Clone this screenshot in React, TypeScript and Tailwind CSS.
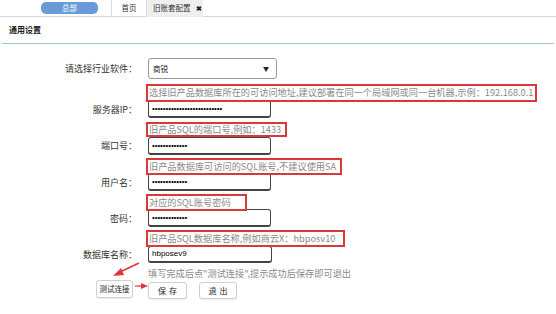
import React from "react";

const Dots = ({ n }: { n: number }) => (
  <span className="font-['Liberation_Sans',sans-serif] text-[8px] leading-none tracking-[-0.1px] text-black">
    {"•".repeat(n)}
  </span>
);

const Input = ({ children, w = "w-[123px]", h = "h-[18px]", mt }: { children: React.ReactNode; w?: string; h?: string; mt: string }) => (
  <div className={`relative ${mt} ${w} ${h} flex items-center pl-[3px] rounded-[3px] border border-[#444] border-b-2 border-r-[1.5px] bg-white`}>
    {children}
  </div>
);

const Row = ({ label, children }: { label?: string; children: React.ReactNode }) => (
  <div className="flex items-center">
    <div className="w-[148px] shrink-0 pr-[11px] text-right text-[9px] text-[#333]">{label ? `${label}：` : ""}</div>
    {children}
  </div>
);

const Hint = ({ text, w, h, mt }: { text: string; w: string; h: string; mt: string }) => (
  <div className={`relative z-10 flex ${mt}`}>
    <div className="w-[146px] shrink-0" />
    <div className={`${w} ${h} border-2 border-[#d9383d] flex items-center pl-[1px] text-[9.2px] leading-none text-[#8a8a8a] whitespace-nowrap`}>
      {text}
    </div>
  </div>
);

export default function App() {
  return (
    <div className="relative w-[556px] h-[314px] bg-white overflow-hidden font-['Noto_Sans_CJK_SC',sans-serif]">
      {/* top tab bar */}
      <div className="h-[17px] border-b border-[#d6d6d6] flex items-center">
        <div className="ml-[41px] w-[57px] h-[12px] rounded-[5px] bg-[#6a9ad8] flex items-center justify-center text-[7.5px] text-white">总部</div>
        <div className="ml-[13px] h-[17px] border-l border-[#dcdcdc]" />
        <div className="w-[34px] text-center text-[7.5px] text-[#333]">首页</div>
        <div className="h-[17px] border-l border-[#dcdcdc] bg-[#efefef] w-[57px] flex items-center pl-[6px] text-[7.5px] text-[#333]">
          旧账套配置<span className="ml-[5px] text-[7px] font-bold text-[#222]">✖</span>
        </div>
      </div>
      {/* section header */}
      <div className="h-[27px] mx-[2px] border-b border-[#9cc6c6] flex items-center pl-[7px] text-[8px] font-bold text-[#222]">通用设置</div>

      {/* form */}
      <div className="flex flex-col">
        <div className="mt-[14px]">
          <Row label="请选择行业软件">
            <div className="w-[129px] h-[21px] rounded-[3px] border border-[#999] flex items-center justify-between pl-[4px] pr-[7px] text-[7.5px] text-[#222]">
              <span>商锐</span>
              <span className="text-[6px]">▼</span>
            </div>
          </Row>
        </div>

        <Hint mt="mt-[5px]" w="w-[391px]" h="h-[18px]" text="选择旧产品数据库所在的可访问地址,建议部署在同一个局域网或同一台机器,示例：192.168.0.1" />
        <Row label="服务器IP">
          <Input mt="mt-[-2px]" h="h-[18px]"><Dots n={26} /></Input>
        </Row>

        <Hint mt="mt-[4px]" w="w-[141px]" h="h-[15px]" text="旧产品SQL的端口号,例如：1433" />
        <Row label="端口号">
          <Input mt="mt-[0px]"><Dots n={13} /></Input>
        </Row>

        <Hint mt="mt-[3px]" w="w-[196px]" h="h-[17px]" text="旧产品数据库可访问的SQL账号,不建议使用SA" />
        <Row label="用户名">
          <Input mt="mt-[-2px]"><Dots n={13} /></Input>
        </Row>

        <Hint mt="mt-[3px]" w="w-[101px]" h="h-[17px]" text="对应的SQL账号密码" />
        <Row label="密码">
          <Input mt="mt-[-2px]"><Dots n={13} /></Input>
        </Row>

        <Hint mt="mt-[3px]" w="w-[199px]" h="h-[17px]" text="旧产品SQL数据库名称,例如商云X：hbposv10" />
        <Row label="数据库名称">
          <Input mt="mt-[-1px]" w="w-[124px]" h="h-[17px]">
            <span className="text-[8px] text-black font-['Liberation_Sans',sans-serif]">hbposev9</span>
          </Input>
        </Row>

        <div className="flex mt-[4px]">
          <div className="w-[148px] shrink-0" />
          <div className="text-[9.2px] text-[#8a8a8a] whitespace-nowrap h-[14px] flex items-center">填写完成后点"测试连接",提示成功后保存即可退出</div>
        </div>

        <div className="flex items-start mt-[0px]">
          <div className="w-[148px] shrink-0 flex justify-end pr-[15px]">
            <div className="mt-[-1px] w-[37px] h-[18px] rounded-[3px] border border-[#d0d0d0] bg-white shadow-[0_1px_1px_rgba(0,0,0,0.08)] flex items-center justify-center text-[7.5px] text-[#222]">测试连接</div>
          </div>
          <div className="mt-[1px] w-[39px] h-[17px] rounded-[3px] border border-[#d0d0d0] bg-white shadow-[0_1px_1px_rgba(0,0,0,0.08)] flex items-center justify-center text-[8px] text-[#222] tracking-[3px] pl-[3px]">保存</div>
          <div className="ml-[12px] mt-[1px] w-[38px] h-[17px] rounded-[3px] border border-[#d0d0d0] bg-white shadow-[0_1px_1px_rgba(0,0,0,0.08)] flex items-center justify-center text-[8px] text-[#222] tracking-[3px] pl-[3px]">退出</div>
        </div>
      </div>

      {/* red annotation arrows */}
      <svg className="absolute left-0 top-0 pointer-events-none" width="556" height="314">
        <line x1="139" y1="263" x2="120" y2="272" stroke="#e0353b" strokeWidth="1.5" />
        <polygon points="113,276 121,268 124,275" fill="#e0353b" />
        <line x1="135" y1="286" x2="142" y2="286" stroke="#e0353b" strokeWidth="1.2" />
        <polygon points="148,286 141,283 141,289" fill="#e0353b" />
      </svg>
    </div>
  );
}
